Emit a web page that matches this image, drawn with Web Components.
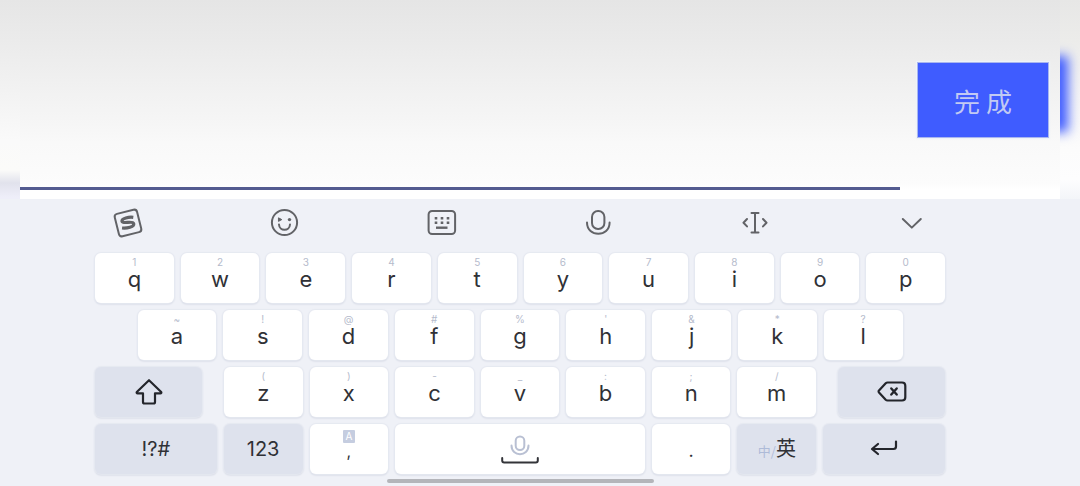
<!DOCTYPE html>
<html lang="zh-CN">
<head>
<meta charset="utf-8">
<meta name="viewport" content="width=device-width, initial-scale=1">
<title>输入</title>
<style>
  body { margin: 0; min-height: 100vh; background: #eff1f7; font-family: Inter, "Noto Sans CJK SC", sans-serif; }
</style>
</head>
<body>
<input-screen></input-screen>

<template id="t-screen">
  <style>
    :host { display: flex; flex-direction: column; }
  </style>
  <text-entry>完 成</text-entry>
  <soft-keyboard></soft-keyboard>
</template>

<template id="t-entry">
  <style>
    :host { display: grid; grid-template-columns: 20px 1fr 20px; }
    .edge { position: relative; overflow: hidden; }
    .left { background: linear-gradient(#e6e6e6, #ebebeb 40px, #f2f2f2 90px, #fafafa 140px, #fbfbf9 170px, #e1e2ec 183px, #eeeef9 197px); }
    .right { background: linear-gradient(#e7e7e6, #ececea 40px, #f4f4f4 90px, #fcfcfc 150px, #fdfdfe 180px, #f3f5f9 199px); }
    .right::before { content: ""; position: absolute; left: -12px; top: 56px; width: 20px; height: 76px; background: #3f5cff; filter: blur(6px); }
    form { display: flex; align-items: flex-start; padding-bottom: 9px;
      background: linear-gradient(#e5e5e5, #eaeaea 40px, #f2f2f2 95px, #f6f6f6 125px, #f9f9f9 143px, #fcfcfc 184px, #fff 190px); }
    input { flex: 1; min-width: 0; height: 190px; box-sizing: border-box; padding: 0 12px; border: 0; border-bottom: 3px solid #535b90; border-radius: 0; background: none; outline: 0; font: 28px "Noto Sans CJK SC", sans-serif; color: #333; }
    button { width: 130px; height: 74px; margin: 63px 12px 0 18px; padding: 0; border: 0; background: #3f5cff; color: #c2caf3; box-shadow: 0 0 0 1px #a9b6ef, 0 0 1px 2px #eef3fa; font: 26px "Noto Sans CJK SC", sans-serif; }
  </style>
  <div class="edge left"></div>
  <form><input type="text" aria-label="输入文字"><button type="button"><slot></slot></button></form>
  <div class="edge right"></div>
</template>

<template id="t-keyboard">
  <style>
    :host { display: block; box-sizing: border-box; padding: 0 12.5% 3px 8.8%; background: #eff1f7; }
    .tools { display: flex; justify-content: space-between; align-items: center; height: 48px; padding: 0 18px 0 17px; margin-bottom: 6px; }
    .keys { display: grid; gap: 7px; }
    .row { display: flex; gap: 7px; }
    .row > * { flex: 79 1 0; min-width: 0; }
    .home { padding: 0 5%; }
    .wide { gap: 22px; }
    .wide > key-cap { flex: 107 1 0; }
    .wide > .row { flex: 592 1 0; }
    .row > .corner { flex: 122 1 0; }
    .row > .space { flex: 250 1 0; }
    .bar { width: 267px; height: 4px; margin: 5px auto 0; border-radius: 2px; background: #b4b5ba; }
    svg { display: block; fill: none; stroke-linecap: round; stroke-linejoin: round; }
    .toggle { display: flex; align-items: baseline; font: 20px/24px "Noto Sans CJK SC", sans-serif; }
    .toggle small { font-size: 13px; color: #aebbd8; }
    .talk { display: grid; justify-items: center; gap: 1px; }
  </style>
  <div class="tools">
    <tool-button label="搜狗"><svg width="32" height="32" viewBox="0 0 32 32" stroke="#626367" stroke-width="2"><g transform="rotate(-14 16 16)"><rect x="4.500" y="4.500" width="23" height="23" rx="3"/><path d="M22.500 11.800C18.500 10.200 10.800 9.800 10.600 12.900 10.500 15.900 21.400 14.600 21.400 17.900 21.400 21.500 13.500 21 9 19.400" stroke-width="3.200" stroke-linecap="butt"/></g></svg></tool-button>
    <tool-button label="表情"><svg width="32" height="32" viewBox="0 0 32 32" stroke="#626367" stroke-width="2"><circle cx="15.500" cy="15.500" r="12.600"/><path d="M10 17.500c.4 7 10.600 7 11 0"/><path d="M9.800 11l3 1.600-3 1.600z" fill="#626367" stroke-width="1"/><circle cx="20.500" cy="12.600" r="1.700" fill="#626367" stroke="none"/></svg></tool-button>
    <tool-button label="键盘"><svg width="32" height="32" viewBox="0 0 32 32" stroke="#626367" stroke-width="2"><rect x="3.600" y="4" width="26.500" height="23" rx="3.500"/><path d="M11 20.700h11.500" stroke-width="2.400" stroke-linecap="butt"/><path d="M9.700 11.300h2.600m3.400 0h2.600m3.400 0h2.600M9.700 15.700h2.600m3.400 0h2.600m3.400 0h2.600" stroke-width="2.600" stroke-linecap="butt"/></svg></tool-button>
    <tool-button label="语音"><svg width="32" height="32" viewBox="0 0 32 32" stroke="#626367" stroke-width="2"><rect x="10" y="4" width="12.400" height="18" rx="6"/><path d="M5 15.500c0 15 22.600 15 22.600 0"/></svg></tool-button>
    <tool-button label="光标"><svg width="32" height="32" viewBox="0 0 32 32" stroke="#626367" stroke-width="2"><path d="M17 6v19.500M13.500 6h7M13.500 25.500h7M9 12l-3.500 3.700 3.500 3.700M25 12l3.500 3.700-3.500 3.700"/></svg></tool-button>
    <tool-button label="收起"><svg width="32" height="32" viewBox="0 0 32 32" stroke="#626367" stroke-width="2"><path d="M7.800 12l9 8.600 9-8.600"/></svg></tool-button>
  </div>
  <div class="keys">
    <div class="row">
      <key-cap hint="1">q</key-cap><key-cap hint="2">w</key-cap><key-cap hint="3">e</key-cap><key-cap hint="4">r</key-cap><key-cap hint="5">t</key-cap><key-cap hint="6">y</key-cap><key-cap hint="7">u</key-cap><key-cap hint="8">i</key-cap><key-cap hint="9">o</key-cap><key-cap hint="0">p</key-cap>
    </div>
    <div class="row home">
      <key-cap hint="~">a</key-cap><key-cap hint="!">s</key-cap><key-cap hint="@">d</key-cap><key-cap hint="#">f</key-cap><key-cap hint="%">g</key-cap><key-cap hint="'">h</key-cap><key-cap hint="&amp;">j</key-cap><key-cap hint="*">k</key-cap><key-cap hint="?">l</key-cap>
    </div>
    <div class="row wide">
      <key-cap kind="function" label="大写"><svg width="28" height="28" viewBox="0 0 28 28" stroke="#23252b" stroke-width="2.200"><path d="M14 2.200L1.800 14q-.6 1.300.8 1.300H8v8.700q0 1.500 1.500 1.500h9q1.500 0 1.500-1.500v-8.700h5.400q1.400 0 .8-1.300z"/></svg></key-cap>
      <div class="row">
        <key-cap hint="(">z</key-cap><key-cap hint=")">x</key-cap><key-cap hint="-">c</key-cap><key-cap hint="_">v</key-cap><key-cap hint=":">b</key-cap><key-cap hint=";">n</key-cap><key-cap hint="/">m</key-cap>
      </div>
      <key-cap kind="function" label="删除"><svg width="30" height="24" viewBox="0 0 30 24" stroke="#23252b" stroke-width="2.200"><path d="M10.500 2.500H25q3.300 0 3.300 3.300v11.400q0 3.300-3.300 3.300H10.500q-1 0-1.800-.8L2 12.500q-.8-1 0-2L8.700 3.300q.8-.8 1.800-.8z"/><path d="M14.300 8.500l5.400 6m0-6l-5.400 6" stroke-width="2.400"/></svg></key-cap>
    </div>
    <div class="row">
      <key-cap kind="function" class="corner">!?#</key-cap>
      <key-cap kind="function">123</key-cap>
      <key-cap kind="comma" hint="A">,</key-cap>
      <key-cap kind="blank" class="space" label="空格"><span class="talk"><svg width="20" height="21" viewBox="0 0 20 21" stroke="#b9c0d3" stroke-width="2"><rect x="5.700" y="1.500" width="8.600" height="13.500" rx="4.300"/><path d="M1.500 10.500c0 11.500 17 11.500 17 0"/></svg><svg width="38" height="7" viewBox="0 0 38 7" stroke="#333439" stroke-width="2"><path d="M1.200 1v2.500q0 2 2 2h31.600q2 0 2-2V1"/></svg></span></key-cap>
      <key-cap kind="period">.</key-cap>
      <key-cap kind="function"><span class="toggle"><small>中/</small>英</span></key-cap>
      <key-cap kind="function" class="corner" label="换行"><svg width="28" height="20" viewBox="0 0 28 20" stroke="#23252b" stroke-width="2.200"><path d="M26 2.500v5q0 2.500-2.500 2.500H2.500M8 5L2 10l6 5"/></svg></key-cap>
    </div>
  </div>
  <div class="bar"></div>
</template>

<template id="t-tool">
  <style>
    :host { display: block; }
    button { display: block; padding: 0; border: 0; background: none; }
  </style>
  <button type="button"><slot></slot></button>
</template>

<template id="t-key">
  <style>
    :host { display: block; }
    button { display: flex; flex-direction: column; align-items: center; width: 100%; height: 50px; padding: 4px 0 0; border: 0; border-radius: 6px; background: #fff; color: #303136; box-shadow: 0 0 1px 1px #e6e9f1, 0 1px 2px #bfc5d4; font: 22px/24px Inter, "Noto Sans CJK SC", sans-serif; }
    .hint { height: 10px; font-size: 10px; line-height: 10px; color: #b5bbcc; }
    :host([kind="function"]) button, :host([kind="blank"]) button { justify-content: center; padding: 0; font-size: 20px; }
    :host([kind="function"]) button { background: #dee2ed; }
    :host([kind="function"]) .hint, :host([kind="blank"]) .hint { display: none; }
    :host([kind="comma"]) button { padding-top: 6px; font-size: 16px; line-height: 16px; }
    :host([kind="comma"]) .hint { width: 12px; height: 13px; border-radius: 1px; background: #c5cde0; color: #fff; font-size: 10px; line-height: 12px; text-align: center; }
    :host([kind="period"]) button { font-size: 18px; line-height: 26px; }
  </style>
  <button type="button"><span class="hint"></span><span><slot></slot></span></button>
</template>

<script>
  class ShadowElement extends HTMLElement {
    constructor() {
      super();
      const template = document.getElementById(this.constructor.template);
      this.attachShadow({ mode: "open" }).append(template.content.cloneNode(true));
    }
    connectedCallback() {
      const label = this.getAttribute("label");
      if (label) this.shadowRoot.querySelector("button").setAttribute("aria-label", label);
    }
  }
  class ToolButton extends ShadowElement { static template = "t-tool"; }
  class KeyCap extends ShadowElement {
    static template = "t-key";
    connectedCallback() {
      super.connectedCallback();
      this.shadowRoot.querySelector(".hint").textContent = this.getAttribute("hint") || "";
    }
  }
  class TextEntry extends ShadowElement { static template = "t-entry"; }
  class SoftKeyboard extends ShadowElement { static template = "t-keyboard"; }
  class InputScreen extends ShadowElement { static template = "t-screen"; }
  customElements.define("tool-button", ToolButton);
  customElements.define("key-cap", KeyCap);
  customElements.define("text-entry", TextEntry);
  customElements.define("soft-keyboard", SoftKeyboard);
  customElements.define("input-screen", InputScreen);
</script>
</body>
</html>
